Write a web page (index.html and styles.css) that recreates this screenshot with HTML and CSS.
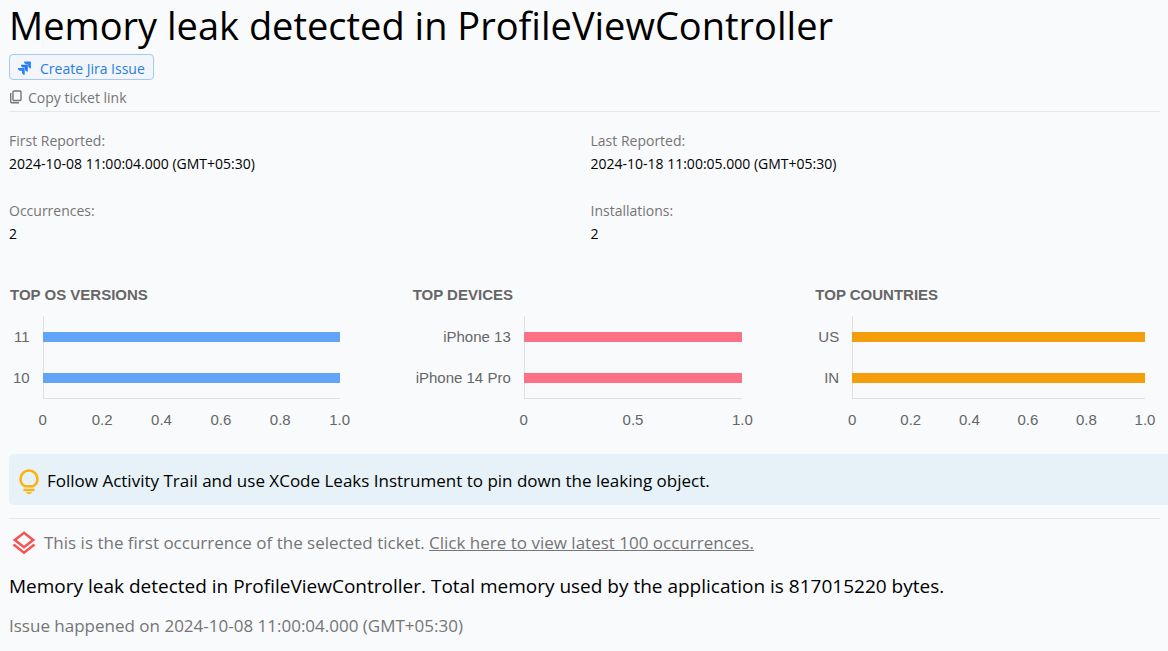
FILE: index.html
```
<!DOCTYPE html>
<html lang="en">
<head>
    <meta charset="UTF-8">
    <meta name="viewport" content="width=device-width, initial-scale=1.0">
    <title>Memory leak detected in ProfileViewController</title>

    <link rel="stylesheet" href="styles.css">
</head>
<body>
    <main class="ticket">
        <header class="ticket-header">
            <h1>Memory leak detected in ProfileViewController</h1>
            <button class="jira-button" type="button">
                <svg width="14" height="14" viewBox="0 0 14 14" aria-hidden="true">
                    <path fill="#2684ff" d="M13.5.5H7c0 1.6 1.3 2.9 2.9 2.9h1.2v1.1c0 1.6 1.2 2.9 2.8 2.9V.9z"/>
                    <path fill="#1f78f4" d="M10.4 3.7H3.9c0 1.6 1.3 2.9 2.900 2.900H8v1.100c0 1.600 1.200 2.900 2.800 2.900V4.100z"/>
                    <path fill="#2684ff" d="M7.300 6.900H.8c0 1.600 1.300 2.900 2.900 2.900h1.200v1.100c0 1.600 1.200 2.900 2.800 2.900V7.300z"/>
                </svg>
                <span>Create Jira Issue</span>
            </button>
            <button class="copy-button" type="button">
                <svg width="13" height="14" viewBox="0 0 13 14" fill="none" stroke="currentColor" aria-hidden="true">
                    <rect x="4" y="1" width="8" height="9.500" rx="1" stroke-width="1.400"/>
                    <path d="M1.700 3v8.800q0 1 1 1H10" stroke-width="1.400"/>
                </svg>
                <span>Copy ticket link</span>
            </button>
        </header>

        <dl class="stats">
            <div class="stat">
                <dt>First Reported:</dt>
                <dd>2024-10-08 11:00:04.000 (GMT+05:30)</dd>
            </div>
            <div class="stat">
                <dt>Last Reported:</dt>
                <dd>2024-10-18 11:00:05.000 (GMT+05:30)</dd>
            </div>
            <div class="stat">
                <dt>Occurrences:</dt>
                <dd>2</dd>
            </div>
            <div class="stat">
                <dt>Installations:</dt>
                <dd>2</dd>
            </div>
        </dl>

        <div class="charts">
            <section class="chart chart-os">
                <h2>TOP OS VERSIONS</h2>
                <div class="chart-body">
                    <div class="chart-labels">
                        <span>11</span>
                        <span>10</span>
                    </div>
                    <div class="chart-plot">
                        <div class="bar" style="width: 100%"></div>
                        <div class="bar" style="width: 100%"></div>
                    </div>
                    <div class="chart-ticks">
                        <span>0</span>
                        <span>0.2</span>
                        <span>0.4</span>
                        <span>0.6</span>
                        <span>0.8</span>
                        <span>1.0</span>
                    </div>
                </div>
            </section>

            <section class="chart chart-devices">
                <h2>TOP DEVICES</h2>
                <div class="chart-body">
                    <div class="chart-labels">
                        <span>iPhone 13</span>
                        <span>iPhone 14 Pro</span>
                    </div>
                    <div class="chart-plot">
                        <div class="bar" style="width: 100%"></div>
                        <div class="bar" style="width: 100%"></div>
                    </div>
                    <div class="chart-ticks">
                        <span>0</span>
                        <span>0.5</span>
                        <span>1.0</span>
                    </div>
                </div>
            </section>

            <section class="chart chart-countries">
                <h2>TOP COUNTRIES</h2>
                <div class="chart-body">
                    <div class="chart-labels">
                        <span>US</span>
                        <span>IN</span>
                    </div>
                    <div class="chart-plot">
                        <div class="bar" style="width: 100%"></div>
                        <div class="bar" style="width: 100%"></div>
                    </div>
                    <div class="chart-ticks">
                        <span>0</span>
                        <span>0.2</span>
                        <span>0.4</span>
                        <span>0.6</span>
                        <span>0.8</span>
                        <span>1.0</span>
                    </div>
                </div>
            </section>
        </div>

        <div class="hint">
            <svg width="20" height="26" viewBox="0 0 20 26" aria-hidden="true">
                <path fill="none" stroke="#ffb20f" stroke-width="2.500" d="M6.200 18.300C3.400 16.900 1.500 14.300 1.500 11A8.500 8.500 0 0 1 18.500 11C18.500 14.300 16.600 16.900 13.800 18.300Z"/>
                <path fill="#ffb20f" d="M4.500 20.800h11v2.400h-11zM7 24.200h6c-.3 1.200-1.300 1.800-3 1.800s-2.700-.6-3-1.800z"/>
            </svg>
            <p>Follow Activity Trail and use XCode Leaks Instrument to pin down the leaking object.</p>
        </div>

        <section class="occurrence">
            <div class="occurrence-note">
                <svg width="24" height="24" viewBox="0 0 24 24" fill="none" stroke="#f5534f" stroke-width="2.500" aria-hidden="true">
                    <path d="M12 1.800l9.200 7.200L12 16.200 2.800 9z"/>
                    <path d="M1.500 13.500L12 21.700l10.500-8.200"/>
                </svg>
                <p>This is the first occurrence of the selected ticket. <a href="#">Click here to view latest 100 occurrences.</a></p>
            </div>
            <p class="message">Memory leak detected in ProfileViewController. Total memory used by the application is 817015220 bytes.</p>
            <p class="happened">Issue happened on 2024-10-08 11:00:04.000 (GMT+05:30)</p>
        </section>
    </main>
</body>
</html>
```
FILE: styles.css
```
* {
    margin: 0;
    padding: 0;
    box-sizing: border-box;
}

body {
    background-color: #f9fafc;
    color: #000;
    font-family: "Segoe UI", "Open Sans", "Noto Sans", sans-serif;
    font-size: 14px;
    line-height: 24px;
    overflow-x: hidden;
}

.ticket {
    padding: 0 8px 0 9px;
}

.ticket-header {
    display: flex;
    flex-direction: column;
    align-items: flex-start;
    border-bottom: 1px solid #e6e7e9;
    padding-bottom: 2px;
}

h1 {
    font-size: 38px;
    font-weight: 400;
    line-height: 50px;
    padding-bottom: 4px;
}

button {
    display: flex;
    align-items: center;
    font-family: inherit;
    font-size: 14px;
    cursor: pointer;
}

.jira-button {
    gap: 9px;
    height: 26px;
    padding: 2px 8px 0 7px;
    border: 1px solid #a3caf5;
    border-radius: 4px;
    background-color: #f3f5fa;
    color: #1f7fe5;
}

.copy-button {
    gap: 6px;
    height: 24px;
    margin-top: 5px;
    border: none;
    background: none;
    color: #757575;
}

.stats {
    display: grid;
    grid-template-columns: 1fr 1fr;
    gap: 24px 12px;
    padding-top: 17px;
}

.stat dt,
.stat dd {
    line-height: 23px;
}

.stat dt {
    color: #757575;
}

.charts {
    display: grid;
    grid-template-columns: repeat(3, 1fr);
    gap: 57px;
    padding-top: 41px;
    color: #666;
    font-family: Arial, "Liberation Sans", sans-serif;
    font-size: 15px;
}

.chart h2 {
    font-size: 15px;
    line-height: 18px;
    padding-left: 1px;
}

.chart-body {
    display: grid;
    grid-template-columns: auto 1fr;
    column-gap: 13px;
    padding: 12px 15px 0 4px;
}

.chart-labels {
    display: grid;
    grid-template-rows: 41px 41px;
    align-items: center;
    text-align: right;
}

.chart-plot {
    display: grid;
    grid-template-rows: 41px 41px;
    align-items: center;
    border-left: 1px solid #dfe0e2;
    border-bottom: 1px solid #dfe0e2;
}

/* the bars are painted over the axis line */
.bar {
    height: 10px;
    margin-left: -1px;
    box-sizing: content-box;
    padding-right: 1px;
}

.chart-os .bar {
    background-color: #63a4fb;
}

.chart-devices .bar {
    background-color: #fc7185;
}

.chart-countries .bar {
    background-color: #f59e0b;
}

.chart-ticks {
    grid-column: 2;
    display: flex;
    justify-content: space-between;
    padding-top: 9px;
}

/* zero width so that each number is centred on its tick */
.chart-ticks span {
    display: flex;
    justify-content: center;
    width: 0;
}

.hint {
    display: flex;
    align-items: center;
    gap: 8px;
    min-height: 51px;
    margin: 22px -8px 13px 0;
    padding: 2px 10px 0;
    border-radius: 5px 0 0 5px;
    background-color: #e6f2f8;
    font-size: 17px;
}

.occurrence {
    border-top: 1px solid #e6e7e9;
    padding-top: 12px;
}

.occurrence-note {
    display: flex;
    align-items: center;
    gap: 8px;
    padding-left: 3px;
    color: #757575;
    font-size: 17px;
}

.occurrence-note a {
    color: inherit;
}

.message {
    font-size: 19px;
    margin-top: 19px;
}

.happened {
    color: #757575;
    font-size: 17px;
    margin-top: 16px;
}
```
